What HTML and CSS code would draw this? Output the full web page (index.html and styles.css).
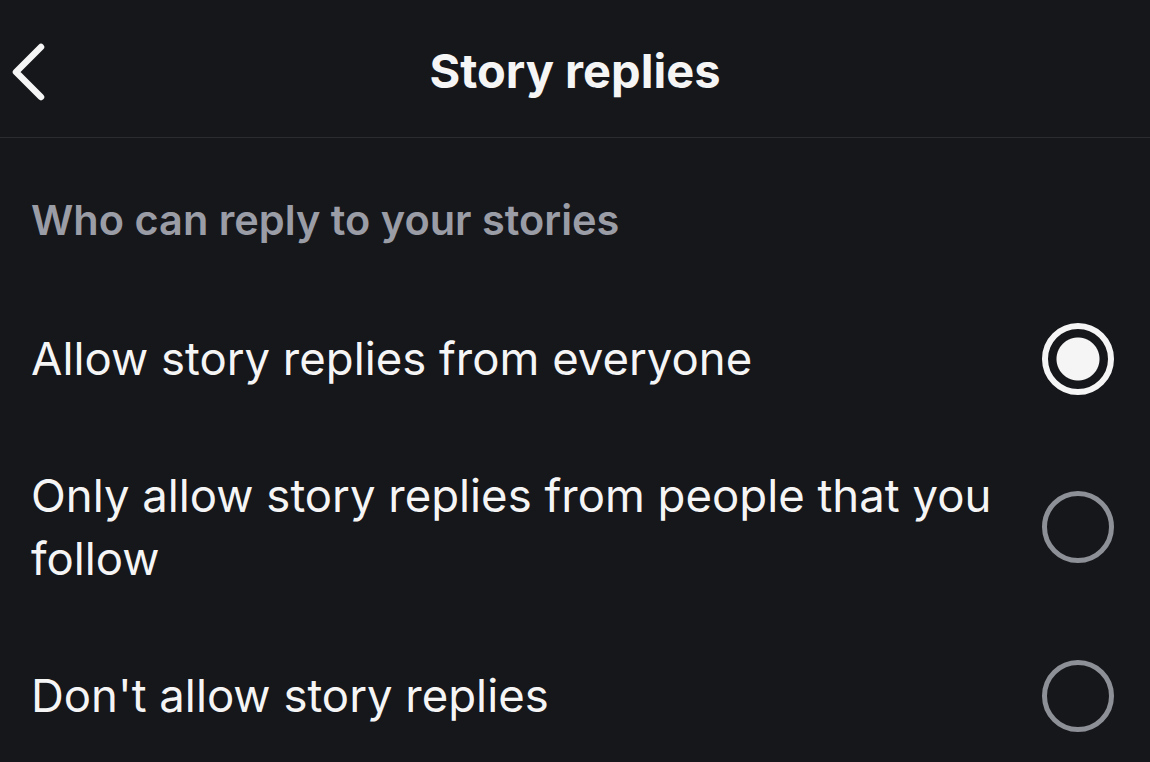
FILE: index.html
```html
<!DOCTYPE html>
<html lang="en">
<head>
  <meta charset="UTF-8" />
  <meta name="viewport" content="width=device-width, initial-scale=1.0"/>
  <link rel="stylesheet" href="styles.css">
</head>
<body>
  <div class="topbar">
    <button class="backbtn" aria-label="Back">
      <svg width="40" height="60" viewBox="0 0 40 60">
        <path d="M33 5 L8 30 L33 55" fill="none" stroke="#f5f5f5" stroke-width="6.5" stroke-linecap="round" stroke-linejoin="round"/>
      </svg>
    </button>
    <h1>Story replies</h1>
  </div>

  <div class="section">
    <p class="label">Who can reply to your stories</p>

    <div class="option">
      <span class="optiontext">Allow story replies from everyone</span>
      <span class="radio checked"></span>
    </div>
    <div class="option">
      <span class="optiontext">Only allow story replies from people that you follow</span>
      <span class="radio"></span>
    </div>
    <div class="option">
      <span class="optiontext">Don't allow story replies</span>
      <span class="radio"></span>
    </div>
  </div>
</body>
</html>
```

FILE: styles.css
```css
body {
  margin: 0;
  background-color: #16171b;
  color: #f5f5f5;
  font-family: Inter, "Noto Sans", sans-serif;
  width: 1150px;
  height: 762px;
  overflow: hidden;
}

.topbar {
  position: relative;
  height: 137px;
  border-bottom: 1px solid #2b2c31;
  display: flex;
  align-items: center;
  justify-content: center;
}
.topbar h1 {
  margin: 0 0 -4px;
  font-size: 47px;
  font-weight: 700;
}
.backbtn {
  position: absolute;
  left: 8px;
  top: 42px;
  background: none;
  border: none;
  padding: 0;
}
.backbtn svg {
  display: block;
}

.section {
  padding: 57px 36px 0 31px;
}
.label {
  margin: 0 0 45px;
  line-height: 50px;
  font-size: 41.5px;
  font-weight: 600;
  color: #9b9da6;
}

.option {
  display: flex;
  align-items: center;
  justify-content: space-between;
  padding: 37px 0;
  gap: 30px;
}
.optiontext {
  font-size: 45.5px;
  line-height: 63px;
}
.radio {
  flex: none;
  width: 62px;
  height: 62px;
  margin: -5px 0;
  border-radius: 50%;
  border: 5px solid #8e9098;
}
.radio.checked {
  width: 60px;
  height: 60px;
  border: 6px solid #f5f5f5;
  background: radial-gradient(circle, #f5f5f5 0 21px, transparent 22px);
  box-shadow: inset 0 0 0 7px #16171b;
}
```
